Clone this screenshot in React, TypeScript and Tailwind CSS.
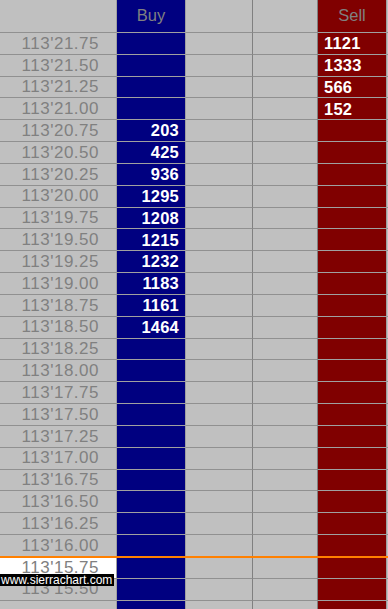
import React from "react";

const buy: Record<string, number> = {
  "20.75": 203,
  "20.50": 425,
  "20.25": 936,
  "20.00": 1295,
  "19.75": 1208,
  "19.50": 1215,
  "19.25": 1232,
  "19.00": 1183,
  "18.75": 1161,
  "18.50": 1464,
};
const sell: Record<string, number> = {
  "21.75": 1121,
  "21.50": 1333,
  "21.25": 566,
  "21.00": 152,
};

function key(v: number) {
  const whole = Math.floor(v);
  const frac = Math.round((v - whole) * 100);
  return `${whole}.${String(frac).padStart(2, "0")}`;
}

const rows: { k: string; price: string }[] = [];
for (let i = 0; i < 26; i++) {
  const v = 21.75 - 0.25 * i;
  const k = key(v);
  rows.push({ k, price: `113'${k}` });
}
rows.push({ k: "", price: "" });

const font = { fontFamily: '"Liberation Sans", Arial, sans-serif' };

function Row({ k, price }: { k: string; price: string }) {
  const orange = k === "15.75";
  const t = orange ? "" : "border-t";
  return (
    <div
      className={`flex h-[21.83px] shrink-0 ${orange ? "border-t-2 border-t-[#ff8000]" : ""}`}
    >
      <div
        className={`w-[117px] shrink-0 flex items-center justify-end pr-[17px] border-r border-r-[#a0a0a0] ${t} border-t-[#909090] text-[17px] tracking-[0.5px] text-[#808080] ${orange ? "bg-white" : "bg-[#c0c0c0]"}`}
      >
        {price}
      </div>
      <div
        className={`w-[69px] shrink-0 flex items-center justify-end pr-[6px] bg-[#000080] border-r border-r-[#a0a0a0] ${t} border-t-[#a0a0a0] text-[16.5px] font-bold tracking-[0.2px] text-white`}
      >
        {buy[k] ?? ""}
      </div>
      <div
        className={`w-[67px] shrink-0 bg-[#c0c0c0] border-r border-r-[#808080] ${t} border-t-[#909090]`}
      />
      <div
        className={`w-[65px] shrink-0 bg-[#c0c0c0] border-r border-r-[#808080] ${t} border-t-[#909090]`}
      />
      <div
        className={`w-[69px] shrink-0 flex items-center justify-start pl-[6px] bg-[#800000] border-r border-r-[#a0a0a0] ${t} border-t-[#a0a0a0] text-[16.5px] font-bold tracking-[0.2px] text-white`}
      >
        {sell[k] ?? ""}
      </div>
      <div className={`w-[1px] shrink-0 bg-[#c0c0c0] ${t} border-t-[#909090]`} />
    </div>
  );
}

export default function App() {
  return (
    <div
      className="relative w-[388px] h-[609px] overflow-hidden bg-[#c0c0c0] flex flex-col"
      style={font}
    >
      <div className="flex h-[32px] shrink-0">
        <div className="w-[117px] shrink-0 bg-[#c0c0c0] border-r border-r-[#a0a0a0]" />
        <div className="w-[69px] shrink-0 bg-[#000080] border-r border-r-[#a0a0a0] flex items-center justify-center pb-[2px] text-[16.5px] text-[#808080]">
          Buy
        </div>
        <div className="w-[67px] shrink-0 bg-[#c0c0c0] border-r border-r-[#808080]" />
        <div className="w-[65px] shrink-0 bg-[#c0c0c0] border-r border-r-[#808080]" />
        <div className="w-[69px] shrink-0 bg-[#800000] border-r border-r-[#a0a0a0] flex items-center justify-center pb-[2px] text-[16.5px] text-[#808080]">
          Sell
        </div>
        <div className="w-[1px] shrink-0 bg-[#c0c0c0]" />
      </div>
      {rows.map((r, i) => (
        <Row key={i} k={r.k} price={r.price} />
      ))}
      <div className="absolute left-0 top-[574px] w-[114px] h-[12px] bg-black text-white text-[12px] leading-[12px] pl-[1px] whitespace-nowrap overflow-hidden">
        www.sierrachart.com
      </div>
    </div>
  );
}
